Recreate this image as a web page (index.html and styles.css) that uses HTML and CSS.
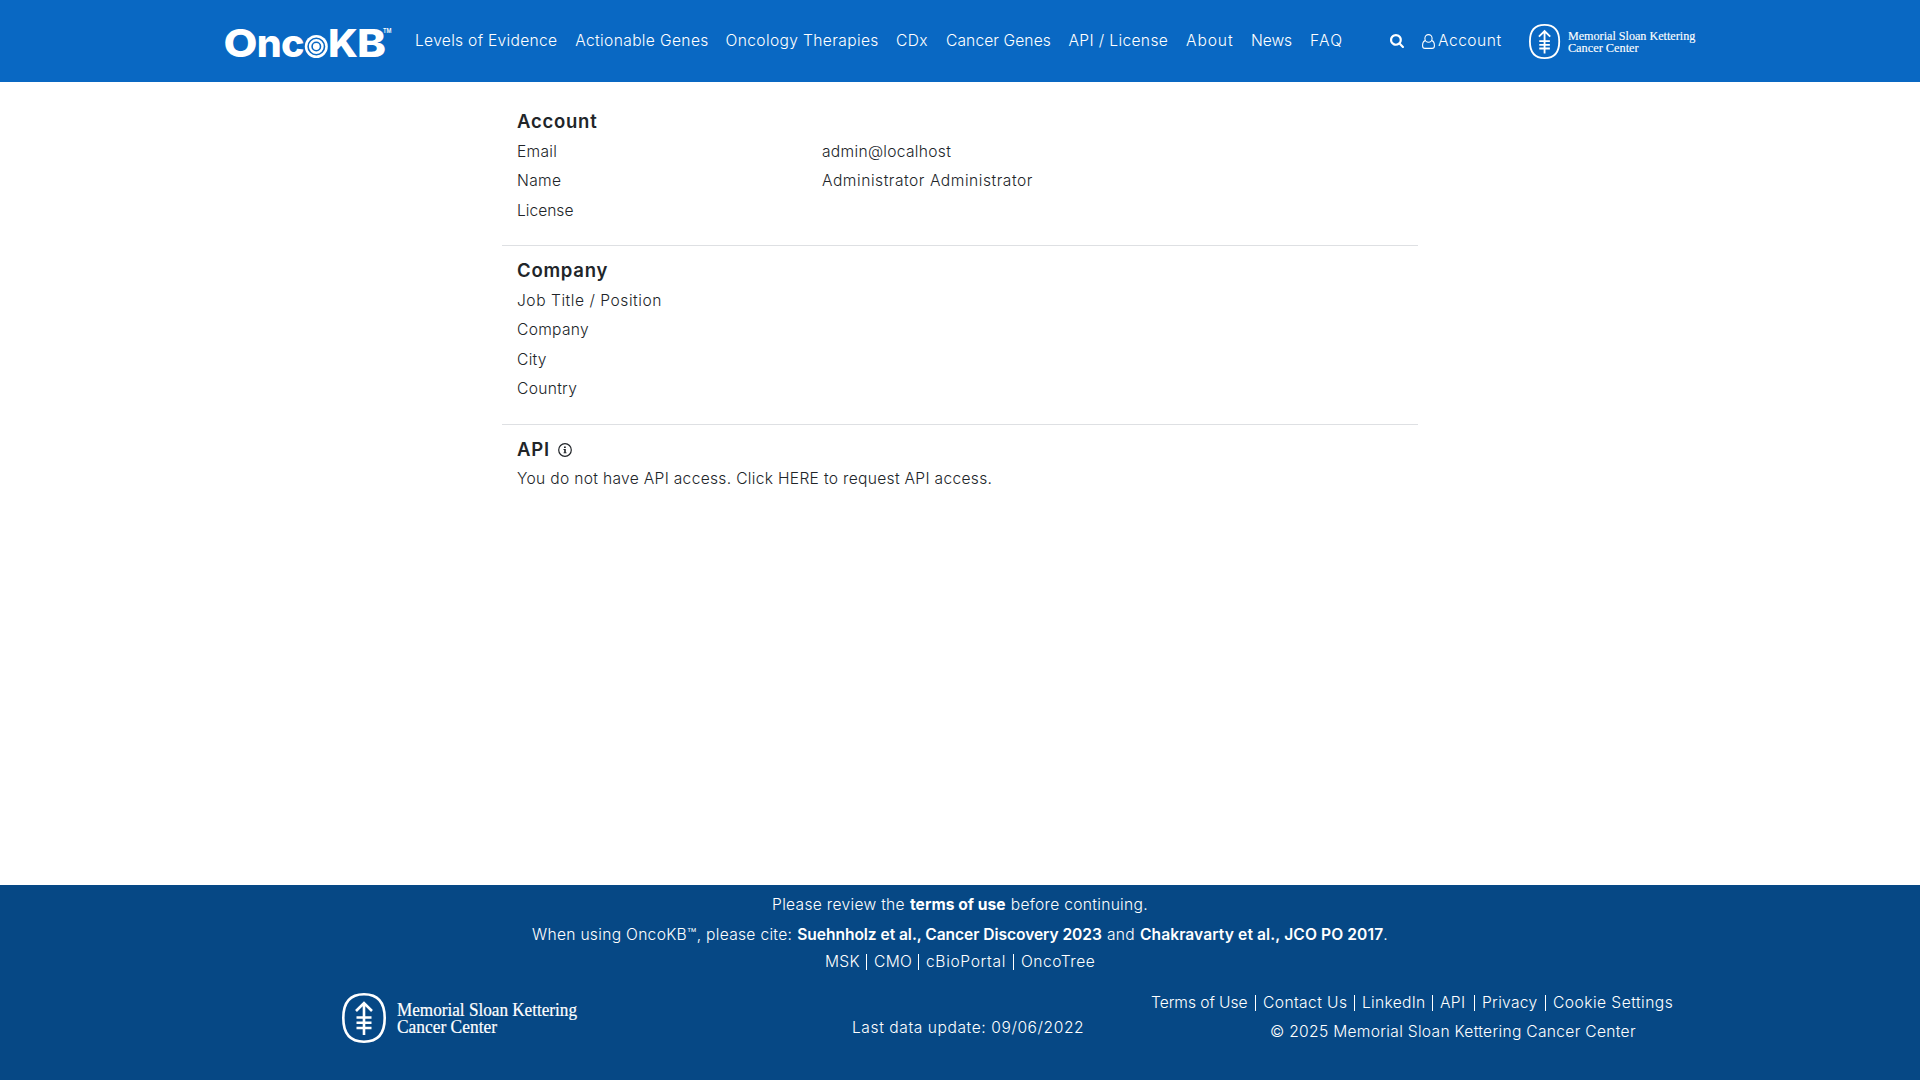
FILE: index.html
```
<!DOCTYPE html>
<html lang="en">
<head>
<meta charset="utf-8">
<title>Account | OncoKB</title>
<link rel="stylesheet" href="styles.css">
</head>
<body>
<svg class="defs" width="0" height="0">
  <symbol id="msk" viewBox="0 0 236 50" preserveAspectRatio="none">
    <path d="M22 1.300C34 1.300 42.700 7 42.700 25S34 48.700 22 48.700 1.300 43 1.300 25 10 1.300 22 1.300Z" fill="none" stroke="#fff" stroke-width="2.600"/>
    <path d="M22 9.500V42M14 18L22 10L30 18M14.500 24.500H29.500M14.500 29.800H29.500M14.500 35H29.500" fill="none" stroke="#fff" stroke-width="2.600"/>
    <text x="55" y="23" textLength="180" lengthAdjust="spacingAndGlyphs">Memorial Sloan Kettering</text>
    <text x="55" y="40" textLength="100" lengthAdjust="spacingAndGlyphs">Cancer Center</text>
  </symbol>
</svg>
<header class="topbar">
  <svg class="brand" viewBox="0 0 168 34" role="img" aria-label="OncoKB">
    <g class="brand-text">
      <text x="-1.500" y="31" textLength="34" lengthAdjust="spacingAndGlyphs">O</text>
      <text x="31.800" y="31" textLength="25" lengthAdjust="spacingAndGlyphs">n</text>
      <text x="56" y="31" textLength="23.500" lengthAdjust="spacingAndGlyphs">c</text>
      <text x="103" y="31" textLength="30" lengthAdjust="spacingAndGlyphs">K</text>
      <text x="132" y="31" textLength="29" lengthAdjust="spacingAndGlyphs">B</text>
    </g>
    <circle cx="91.300" cy="20.500" r="11.500" fill="#fff"/>
    <g fill="none" stroke="#0968c3" stroke-width="1.600"><circle cx="91.300" cy="20.500" r="8.200"/><circle cx="91.300" cy="20.500" r="4.200"/></g>
    <text class="tm" x="158" y="6.500" textLength="8.500" lengthAdjust="spacingAndGlyphs">TM</text>
  </svg>
  <nav class="menu">
    <a>Levels of Evidence</a><a>Actionable Genes</a><a>Oncology Therapies</a><a>CDx</a><a>Cancer Genes</a><a>API / License</a><a>About</a><a>News</a><a>FAQ</a>
  </nav>
  <svg class="search" viewBox="0 0 1664 1664"><path fill="#fff" d="M1152 704q0-185-131.500-316.500t-316.500-131.500-316.500 131.500-131.500 316.500 131.500 316.500 316.500 131.500 316.500-131.500 131.500-316.500zm512 832q0 52-38 90t-90 38q-54 0-90-38l-343-342q-179 124-399 124-143 0-273.500-55.500t-225-150-150-225-55.500-273.500 55.500-273.500 150-225 225-150 273.500-55.500 273.500 55.500 225 150 150 225 55.500 273.500q0 220-124 399l343 343q37 37 37 90z"/></svg>
  <a class="account">
    <svg viewBox="0 0 13 15"><g fill="none" stroke="#fff" stroke-width="1.100"><ellipse cx="6.500" cy="4.400" rx="3.600" ry="3.800"/><path d="M3.400 6.600C1.500 7 .6 8.700 .6 11.200V12Q.6 14.400 3 14.400H10Q12.400 14.400 12.400 12V11.200C12.400 8.700 11.500 7 9.600 6.600"/></g></svg>
    Account
  </a>
  <svg class="msk-top" role="img" aria-label="Memorial Sloan Kettering Cancer Center"><use href="#msk"/></svg>
</header>
<main>
  <section>
    <h2>Account</h2>
    <div class="row"><span>Email</span><span>admin@localhost</span></div>
    <div class="row"><span>Name</span><span class="wide">Administrator Administrator</span></div>
    <div class="row"><span class="tight">License</span></div>
  </section>
  <section>
    <h2>Company</h2>
    <div class="row"><span class="wide">Job Title / Position</span></div>
    <div class="row"><span>Company</span></div>
    <div class="row"><span>City</span></div>
    <div class="row"><span>Country</span></div>
  </section>
  <section>
    <h2>API <svg class="info" viewBox="0 0 14 14"><circle cx="7" cy="7" r="6.300" fill="none" stroke="#212529" stroke-width="1.200"/><path fill="#212529" d="M6 3.500H7.800V5H6ZM5.500 6H7.800V9.500H8.600V10.300H5.500V9.500H6.200V6.900H5.500Z"/></svg></h2>
    <p>You do not have API access. Click HERE to request API access.</p>
  </section>
</main>
<footer>
  <p class="review"><span>Please review the</span><b>terms of use</b><span>before continuing.</span></p>
  <p class="cite"><span>When using OncoKB™, please cite:</span><b>Suehnholz et al., Cancer Discovery 2023</b><span>and</span><span><b class="second">Chakravarty et al., JCO PO 2017</b>.</span></p>
  <div class="links sites"><a>MSK</a><a>CMO</a><a>cBioPortal</a><a>OncoTree</a></div>
  <div class="bottom">
    <svg class="msk-foot" role="img" aria-label="Memorial Sloan Kettering Cancer Center"><use href="#msk"/></svg>
    <p class="update">Last data update: 09/06/2022</p>
    <div class="legal">
      <div class="links terms"><a>Terms of Use</a><a>Contact Us</a><a>LinkedIn</a><a>API</a><a>Privacy</a><a>Cookie Settings</a></div>
      <p>© 2025 Memorial Sloan Kettering Cancer Center</p>
    </div>
  </div>
</footer>
</body>
</html>
```
FILE: styles.css
```
* { box-sizing: border-box; }
body {
  margin: 0;
  height: 1080px;
  display: flex;
  flex-direction: column;
  background: #fff;
  color: #212529;
  font: 300 15.600px/24px Inter, "Open Sans", sans-serif;
  letter-spacing: .3px;
}
p { margin: 0; }
svg { display: block; }
.defs { display: none; }

.topbar {
  height: 82px;
  padding-left: 225px;
  display: flex;
  align-items: center;
  background: #0968c3;
  color: #fff;
  white-space: nowrap;
}
.brand { width: 168px; height: 34px; margin-top: 4px; fill: #fff; overflow: visible; }
.brand-text { font: 800 38.500px Inter, sans-serif; letter-spacing: 0; }
.tm { font: 600 6px Inter, sans-serif; letter-spacing: 0; }
.menu {
  margin-left: 22px;
  display: grid;
  grid-template-columns: 160.200px 150.300px 170.500px 50px 122.500px 117.500px 65px 59px 80px;
}
.menu a:nth-child(2), .menu a:nth-child(3), .menu a:nth-child(6) { letter-spacing: .36px; }
.menu a:nth-child(5) { letter-spacing: .1px; }
.menu a:nth-child(7) { letter-spacing: .9px; }
.menu a:nth-child(9) { letter-spacing: 1.200px; }
.menu a:nth-child(8) { letter-spacing: -.1px; }
.search { width: 14px; height: 14px; }
.account { width: 107px; margin-left: 18px; display: flex; align-items: center; gap: 3px; letter-spacing: .5px; }
.account svg { width: 13px; height: 15px; }
.msk-top { width: 167px; height: 35px; }
#msk text { font: 18.500px "Liberation Serif", serif; letter-spacing: 0; fill: #fff; stroke: #fff; stroke-width: .2px; }

main { width: 916px; margin: 0 auto; padding-top: 27.500px; flex: 1; }
section { padding: 0 15px 16.700px; border-bottom: 1px solid #dee0e3; margin-bottom: 12.600px; }
section:last-child { border: 0; }
h2 { display: flex; align-items: center; gap: 8px; height: 24px; margin: -1px 0 7px; font-size: 18.500px; font-weight: 600; letter-spacing: .75px; }
section:last-child h2 { margin: 0 0 6px; }
section:last-child { letter-spacing: .31px; }
.info { width: 14px; height: 14px; margin-top: 2px; }
.row { display: grid; grid-template-columns: 305px 1fr; height: 29.600px; }
.wide { letter-spacing: .53px; }
.tight { letter-spacing: 0; }

footer { height: 195px; padding-top: 8px; background: #064885; color: #fff; }
.review, .cite { display: flex; justify-content: center; gap: 5px; height: 30px; }
.cite { height: 31px; }
b { font-weight: 700; letter-spacing: .05px; }
.cite b { font-weight: 600; letter-spacing: -.06px; }
.cite .second { letter-spacing: .1px; }
.links { display: grid; height: 16px; line-height: 16px; white-space: nowrap; }
.links a { padding-left: 7px; border-right: 1px solid #fff; }
.links a:first-child { padding-left: 0; }
.links a:last-child { border: 0; }
.sites { margin-left: 825px; grid-template-columns: 42px 52px 95px 90px; }
.sites a:nth-child(3) { letter-spacing: .65px; }
.sites a:last-child { letter-spacing: .5px; }
.bottom { display: grid; grid-template-columns: 510px 299px 560px; margin: 21px 0 0 342px; }
.msk-foot { width: 236px; height: 50px; margin-top: 2px; }
.update { margin-top: 25px; letter-spacing: .57px; }
.legal { margin-top: 4px; }
.terms { grid-template-columns: 105px 99px 78px 42px 71px 130px; }
.terms a:first-child { letter-spacing: -.05px; }
.terms a:nth-child(2) { letter-spacing: .4px; }
.terms a:last-child { letter-spacing: .46px; }
.legal p { margin: 9px 0 0 119px; }
```
